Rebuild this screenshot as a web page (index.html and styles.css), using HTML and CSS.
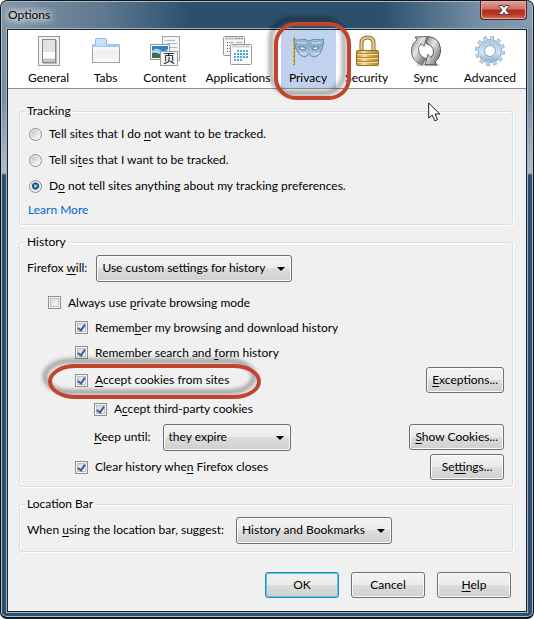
FILE: index.html
```html
<!DOCTYPE html>
<html lang="en">

<head>
	<meta charset="utf-8">
	<title>Options</title>
	<link rel="stylesheet" href="styles.css">
</head>

<body>

	<div class="window">
		<header class="titlebar">
			<h1 class="title">Options</h1>
			<button type="button" class="close" aria-label="Close">
				<svg width="12" height="10" viewBox="0 0 12 10"><path d="M1 .5h3.500L6 2.400 7.500 .5H11v1L8 5l3 3.500v1H7.500L6 7.600 4.500 9.500H1v-1L4 5 1 1.500z" fill="#f4f4f4" stroke="#4b3a45"/></svg>
			</button>
		</header>

		<main class="content">
			<nav class="toolbar">
				<button type="button" class="tab">
					<svg class="icon" viewBox="0 0 32 32">
						<rect x="5.500" y="1.500" width="21" height="29" fill="#f2f2f2" stroke="#9a9a9a"/>
						<rect x="10" y="5" width="14" height="24" fill="#bdbdbd"/>
						<rect x="9.500" y="4.500" width="13" height="23" fill="#e2e2e2" stroke="#888"/>
						<rect x="10" y="17" width="12" height="6" fill="#fff"/>
						<path d="M10 24h12v3H10z" fill="#c4c4c4"/>
					</svg>
					<span>General</span>
				</button>
				<button type="button" class="tab">
					<svg class="icon" viewBox="0 0 32 32">
						<defs><linearGradient id="tabfill" x2="0" y2="1"><stop offset="0" stop-color="#fff"/><stop offset=".5" stop-color="#eee"/><stop offset="1" stop-color="#fafafa"/></linearGradient></defs>
						<path d="M5.500 10V4.500q0-1 1-1h9q1 0 1 1V10" fill="#cfe3fc" stroke="#8fb3e2"/>
						<rect x="2.500" y="9.500" width="27" height="18" fill="url(#tabfill)" stroke="#a3a3a3"/>
						<path d="M2 9h28v3H2z" fill="#a9c6f0"/>
						<path d="M6 8h10v3H6z" fill="#c5dcfa"/>
					</svg>
					<span>Tabs</span>
				</button>
				<button type="button" class="tab">
					<svg class="icon" viewBox="0 0 32 32">
						<rect x="13.500" y="1.500" width="17" height="24" fill="#f4f6f7" stroke="#a5a5a5"/>
						<path d="M16 5.500h10M18 8.500h10M16 12.500h12" stroke="#a9bcc9"/>
						<rect x="1.500" y="9.500" width="19" height="15" fill="#fff" stroke="#999"/>
						<path d="M3 11h16v12H3z" fill="#2c83cf"/>
						<path d="M3 16q4-4 8-1t8-1v5H3z" fill="#a8d6f0"/>
						<path d="M3 18q5-1 9 2t7 0v3H3z" fill="#356f4b"/>
						<rect x="11.500" y="16.500" width="17" height="14" fill="#f6f6f6" stroke="#999"/>
						<text class="glyph" x="14" y="28">页</text>
					</svg>
					<span>Content</span>
				</button>
				<button type="button" class="tab">
					<svg class="icon" viewBox="0 0 32 32">
						<rect x="1.500" y="1.500" width="21" height="19" rx="1" fill="#f5f5f5" stroke="#999"/>
						<path d="M3 3.500h18" stroke="#c0c0c0" stroke-width="2"/>
						<path d="M14 3.500h1M17 3.500h1M20 3.500h1" stroke="#777"/>
						<path d="M5 7.500h1M5 10.500h1M5 13.500h1M5 16.500h1" stroke="#555"/>
						<path d="M7 7.500h5M7 10.500h3M7 13.500h2M7 16.500h2M14 7.500h6" stroke="#aaa"/>
						<rect x="8.500" y="9.500" width="21" height="20" rx="1" fill="#fff" stroke="#999"/>
						<path d="M10 11.500h18" stroke="#ccc" stroke-width="2"/>
						<path d="M15 16h11M12 19h14M12 22h14M12 25h9" stroke="#45aedb" stroke-width="2" stroke-dasharray="2 1"/>
					</svg>
					<span>Applications</span>
				</button>
				<button type="button" class="tab selected">
					<svg class="icon" viewBox="0 0 32 32">
						<defs><linearGradient id="mask" x2="0" y2="1"><stop offset="0" stop-color="#9dbbd3"/><stop offset=".4" stop-color="#86aac7"/><stop offset="1" stop-color="#bcd6ec"/></linearGradient></defs>
						<path d="M2 2v28" stroke="#b38a1f" stroke-width="2"/>
						<path d="M1.500 2v27" stroke="#f0cc58" stroke-dasharray="3 1"/>
						<path d="M1.500 4q4 2 8 .5 4-1 7.500 1.500 4-2.500 8-1.500 3 1 7-.5-.5 6-2 10-2 7-8 8-3 0-5-3.500-2 3.500-5 3.500-5-1-8-8-1-4-2.500-10z" fill="url(#mask)" stroke="#668daf"/>
						<path d="M7 13q3.500-3 7 1-4 2.500-7-1zM20 14q3.500-4 7-1-3 3.500-7 1z" fill="#e9f0fa" stroke="#557a9e"/>
						<path d="M5 7q6 2 9 1M29 7q-5 2-9 1M8 18q3 2 6 0M21 18q3 2 6 0" fill="none" stroke="#d7e8f4"/>
					</svg>
					<span>Privacy</span>
				</button>
				<button type="button" class="tab">
					<svg class="icon" viewBox="0 0 32 32">
						<defs><linearGradient id="brass"><stop offset="0" stop-color="#bd8c2d"/><stop offset=".35" stop-color="#f7dfa0"/><stop offset=".6" stop-color="#d9ad4c"/><stop offset="1" stop-color="#b58327"/></linearGradient></defs>
						<path d="M10.500 17V8q0-5.500 6-5.500t6 5.500v9" fill="none" stroke="#92702d" stroke-width="4"/>
						<path d="M10.500 17V8q0-5.500 6-5.500t6 5.500v9" fill="none" stroke="#e8cf91" stroke-width="2"/>
						<rect x="5.500" y="15.500" width="22" height="15" rx="1" fill="url(#brass)" stroke="#99702a"/>
						<path d="M6 18.500h21M6 22.500h21M6 26.500h21" stroke="#b08638"/>
						<path d="M6 19.500h21M6 23.500h21M6 27.500h21" stroke="#f7e2a4"/>
					</svg>
					<span>Security</span>
				</button>
				<button type="button" class="tab">
					<svg class="icon" viewBox="0 0 32 32">
						<defs><linearGradient id="steel" x2="1" y2="1"><stop offset="0" stop-color="#77797c"/><stop offset=".4" stop-color="#e4e6e8"/><stop offset="1" stop-color="#55585c"/></linearGradient></defs>
						<ellipse cx="18" cy="30" rx="12" ry="1.500" fill="#ccc"/>
						<path d="M12 30Q1 26 1.500 15 2 8 7 5L5 2l12-.5-3 10-3-3q-4 4-2 9 2 5 7 6z" fill="url(#steel)" stroke="#66696d"/>
						<path d="M18 1.500q11 1 12.500 12Q31 22 25 27l2 3-12-.5 3-10 3 3q4-4 2-9-2-4-7-5z" fill="url(#steel)" stroke="#505458"/>
					</svg>
					<span>Sync</span>
				</button>
				<button type="button" class="tab">
					<svg class="icon" viewBox="0 0 32 32">
						<defs><linearGradient id="gear" x2="0" y2="1"><stop offset="0" stop-color="#aecbe0"/><stop offset=".6" stop-color="#d4e6f5"/><stop offset="1" stop-color="#9cbbd4"/></linearGradient></defs>
						<circle cx="16" cy="16" r="12.500" fill="none" stroke="#86aac5" stroke-width="5" stroke-dasharray="3.500 3.045"/>
						<circle cx="16" cy="16" r="8.500" fill="none" stroke="#86aac5" stroke-width="7"/>
						<circle cx="16" cy="16" r="12.500" fill="none" stroke="#bdd6e9" stroke-width="4" stroke-dasharray="2.500 4.045" stroke-dashoffset="-.5"/>
						<circle cx="16" cy="16" r="8.500" fill="none" stroke="url(#gear)" stroke-width="5"/>
					</svg>
					<span>Advanced</span>
				</button>
			</nav>

			<form class="pane">
				<fieldset class="group tracking">
					<legend>Tracking</legend>
					<label class="row radio-row"><input type="radio" name="track"> <span>Tell sites that I do <u>n</u>ot want to be tracked.</span></label>
					<label class="row radio-row"><input type="radio" name="track"> <span>Tell si<u>t</u>es that I want to be tracked.</span></label>
					<label class="row radio-row"><input type="radio" name="track" checked> <span>D<u>o</u> not tell sites anything about my tracking preferences.</span></label>
					<a class="learn" href="#">Learn More</a>
				</fieldset>

				<fieldset class="group">
					<legend>History</legend>
					<div class="row select-row">
						<label for="history-mode">Firefox <u>w</u>ill:</label>
						<span class="select mode"><select id="history-mode"><option>Use custom settings for history</option></select></span>
					</div>
					<label class="row indent-1"><input type="checkbox"> <span>Always use <u>p</u>rivate browsing mode</span></label>
					<label class="row indent-2"><input type="checkbox" checked> <span>Remem<u>b</u>er my browsing and download history</span></label>
					<label class="row indent-2"><input type="checkbox" checked> <span>Remember search and <u>f</u>orm history</span></label>
					<div class="row cookies indent-2">
						<label class="check accept"><input type="checkbox" checked> <span><u>A</u>ccept cookies from sites</span></label>
						<button type="button" class="button"><u>E</u>xceptions...</button>
					</div>
					<label class="row tall indent-3"><input type="checkbox" checked> <span>A<u>c</u>cept third-party cookies</span></label>
					<div class="row tall indent-3">
						<label for="keep"><u>K</u>eep until:</label>
						<span class="select keep"><select id="keep"><option>they expire</option></select></span>
						<button type="button" class="button"><u>S</u>how Cookies...</button>
					</div>
					<div class="row last indent-2">
						<label class="check"><input type="checkbox" checked> <span>Clear history whe<u>n</u> Firefox closes</span></label>
						<button type="button" class="button settings">Se<u>t</u>tings...</button>
					</div>
				</fieldset>

				<fieldset class="group">
					<legend>Location Bar</legend>
					<div class="row select-row">
						<label for="suggest">When <u>u</u>sing the location bar, suggest:</label>
						<span class="select suggest"><select id="suggest"><option>History and Bookmarks</option></select></span>
					</div>
				</fieldset>

				<div class="actions">
					<button type="button" class="button default">OK</button>
					<button type="button" class="button">Cancel</button>
					<button type="button" class="button"><u>H</u>elp</button>
				</div>
			</form>
		</main>

		<div class="callout"></div>
		<svg class="pointer" width="13" height="20" viewBox="0 0 13 20"><path d="M.7 1v15l3.500-3 2.600 5.800 2.700-1.200L7 12h4.800z" fill="#fff" stroke="#1c1c33"/></svg>
	</div>

</body>

</html>
```
FILE: styles.css
```css
:root {
	--face: #f0f0f0;
	--frame: #2e506d;
	--line: #d5dfe5;
	--button-border: #707070;
	--callout: #c1452c;
}
*, *::before { box-sizing: border-box; }
body { margin: 0; background: #fff; color: #000; font: 12px/16px Lato, "Open Sans", sans-serif; }
button, select { font: inherit; color: inherit; }
u { text-underline-offset: 2px; }

/* window frame */
.window {
	position: relative;
	display: flex;
	flex-direction: column;
	min-height: 100vh;
	padding: 0 6px 5px;
	border: 1px solid #10151c;
	border-bottom-width: 2px;
	border-radius: 7px;
	box-shadow: inset 0 0 0 1px #a9bdcb;
	background:
		linear-gradient(90deg, #8295a7 0, #5f7990 100px, #2b506c 190px, #2b506c 380px, #7790a6 480px, #859cb0) 0 0 / 100% 28px no-repeat,
		linear-gradient(#8295a7 0, #7b8fa3 70px, #b3bdc9 144px, var(--frame) 146px) 0 28px / 100% 100% no-repeat;
}
.titlebar { display: flex; justify-content: space-between; align-items: flex-start; height: 28px; padding-left: 1px; }
.title {
	margin: 6px 0 0;
	font-size: 12px;
	line-height: 16px;
	font-weight: normal;
	text-shadow: 0 0 6px #fff, 0 0 8px #fff, 0 0 10px #dde6ee;
}
.close {
	width: 47px;
	height: 19px;
	padding: 0;
	border: 1px solid #45242b;
	border-top: 0;
	border-radius: 0 0 4px 4px;
	box-shadow: inset 0 0 0 1px #e8aaa0;
	background: linear-gradient(#dfa298, #cc7064 45%, #b02a19 50%, #bd3a25 75%, #d8765a);
}
.close svg { display: block; margin: 0 auto; }

.content { flex: 1; border: 1px solid #18242f; outline: 1px solid #9fb4c3; background: var(--face); }

/* category strip */
.toolbar {
	display: grid;
	grid-template-columns: 57fr 57fr 61fr 85fr 55fr 62fr 56fr 72fr;
	padding-left: 12px;
	height: 59px;
	background: #fff;
	border-bottom: 1px solid #919191;
}
.tab {
	display: flex;
	flex-direction: column;
	align-items: center;
	padding: 5px 0 0;
	border: 0;
	background: none;
	white-space: nowrap;
}
.tab span { margin-top: 3px; }
.tab.selected { background: #c1d2ee; }
.icon { width: 32px; height: 32px; flex: none; }
.glyph { font: 12px "Noto Sans CJK SC", sans-serif; }

/* groups */
.pane { padding: 14px 13px 12px 11px; }
.group {
	min-width: 0;
	margin: 0 0 9px;
	padding: 0 8px 3px 7px;
	border: 1px solid var(--line);
	border-radius: 3px;
	box-shadow: inset 1px 1px #fff, 1px 1px #fff;
}
.group legend { padding: 0 2px; margin-left: -2px; }
.tracking { padding-top: 2px; padding-bottom: 6px; }
.row { display: flex; align-items: center; height: 25px; white-space: nowrap; }
.check { display: flex; align-items: center; }
.radio-row { height: 26px; padding-left: 2px; }
.select-row { height: 36px; }
.cookies { height: 30px; }
.tall { height: 28px; }
.last { height: 32px; }
.indent-1 { margin-top: 4px; padding-left: 21px; }
.indent-2 { padding-left: 48px; }
.indent-3 { padding-left: 67px; }
.row .button { margin-left: auto; }
.learn { display: block; width: max-content; margin: 3px 0 0 1px; color: #0066cc; text-decoration: none; }

input { appearance: none; flex: none; width: 13px; height: 13px; margin: 0 7px 0 0; border: 1px solid #8e8f8f; }
input[type="radio"] { border-radius: 50%; box-shadow: inset 0 0 0 1px #f4f4f4; background: linear-gradient(135deg, #b5b8bb, #f4f4f4 75%); }
input[type="radio"]:checked { background: radial-gradient(circle at 50% 45%, #7fd5f4 0 1px, #1b77a7 2px, #153f62 3px, #d9e0e5 4px); }
input[type="checkbox"] { box-shadow: inset 0 0 0 1px #f4f4f4, inset 0 0 0 2px #c0c4c8; background: linear-gradient(135deg, #c9ccd0, #f6f6f6 75%); }
input[type="checkbox"]:checked::after {
	content: "";
	display: block;
	width: 3px;
	height: 6px;
	margin: 1px 0 0 3px;
	border: solid #405a9c;
	border-width: 0 2px 2px 0;
	transform: rotate(35deg);
}

.button, .select select {
	border: 1px solid var(--button-border);
	border-radius: 3px;
	box-shadow: inset 0 0 0 1px #fbfbfb;
	background: linear-gradient(#f2f2f2, #ebebeb 50%, #dddddd 50%, #cfcfcf);
}
.button { height: 26px; padding: 0 5px; }
.settings { width: 74px; }
.select { position: relative; display: block; }
.select::after {
	content: "";
	position: absolute;
	right: 7px;
	top: 12px;
	border: solid transparent;
	border-top-color: #000;
	border-width: 4px 4px 0;
}
.select select { appearance: none; display: block; width: 100%; height: 27px; padding: 0 5px; }
.mode { width: 196px; margin-left: 9px; }
.keep { width: 128px; margin-left: 12px; }
.suggest { width: 156px; margin-left: 12px; }

.actions { display: flex; justify-content: flex-end; gap: 12px; padding: 11px 2px 0 0; }
.actions .button { width: 74px; }
.actions .default { border-color: #3c7fb1; box-shadow: inset 0 0 0 1px #46d0f5; }

/* annotations */
.callout, .accept::before {
	position: absolute;
	border: 4px solid var(--callout);
	filter: drop-shadow(-5px -5px 2px rgba(0, 0, 0, .4));
	pointer-events: none;
}
.callout { left: 273px; top: 21px; width: 77px; height: 78px; border-radius: 22px; }
.accept { position: relative; }
.accept::before { content: ""; left: -27px; top: -8px; width: 213px; height: 35px; border-radius: 28px / 18px; }
.pointer { position: absolute; left: 427px; top: 101px; }
```
